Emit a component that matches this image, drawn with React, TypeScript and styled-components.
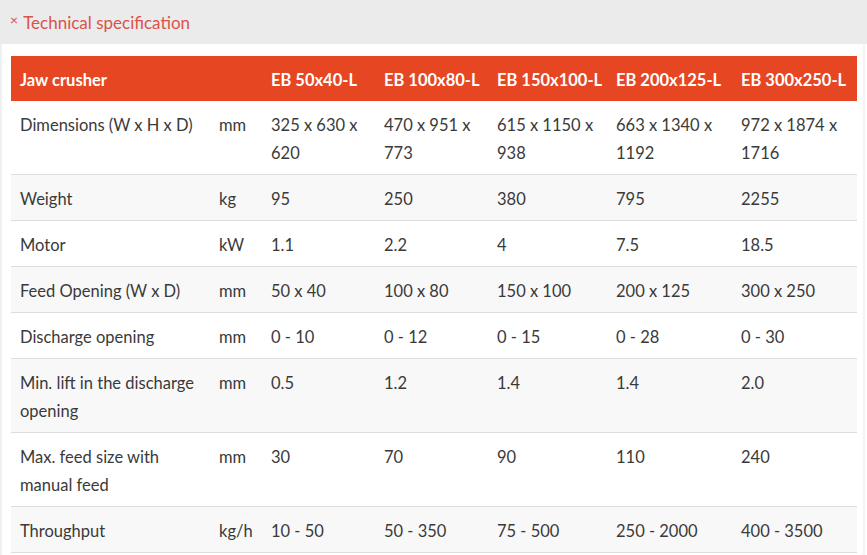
import React from "react";
import styled, { createGlobalStyle } from "styled-components";

const GlobalStyle = createGlobalStyle`
    html, body {
        margin: 0;
        padding: 0;
        background: #ffffff;
    }

    body {
        font-family: Lato, "Liberation Sans", sans-serif;
        color: #333333;
    }
`;

const models = ["EB 50x40-L", "EB 100x80-L", "EB 150x100-L", "EB 200x125-L", "EB 300x250-L"];

const rows: { label: string; unit: string; values: string[] }[] = [
    { label: "Dimensions (W x H x D)", unit: "mm", values: ["325 x 630 x 620", "470 x 951 x 773", "615 x 1150 x 938", "663 x 1340 x 1192", "972 x 1874 x 1716"] },
    { label: "Weight", unit: "kg", values: ["95", "250", "380", "795", "2255"] },
    { label: "Motor", unit: "kW", values: ["1.1", "2.2", "4", "7.5", "18.5"] },
    { label: "Feed Opening (W x D)", unit: "mm", values: ["50 x 40", "100 x 80", "150 x 100", "200 x 125", "300 x 250"] },
    { label: "Discharge opening", unit: "mm", values: ["0 - 10", "0 - 12", "0 - 15", "0 - 28", "0 - 30"] },
    { label: "Min. lift in the discharge opening", unit: "mm", values: ["0.5", "1.2", "1.4", "1.4", "2.0"] },
    { label: "Max. feed size with manual feed", unit: "mm", values: ["30", "70", "90", "110", "240"] },
    { label: "Throughput", unit: "kg/h", values: ["10 - 50", "50 - 350", "75 - 500", "250 - 2000", "400 - 3500"] },
];

const colWidths = [199, 52, 113, 113, 119, 125, 125];

const Page = styled.div`
    width: 867px;
    height: 555px;
    overflow: hidden;
    display: flex;
    flex-direction: column;
`;

const TabBar = styled.div`
    height: 44px;
    background: #ebebeb;
    display: flex;
    align-items: center;
    padding-left: 10px;
    flex-shrink: 0;
`;

const TabTitle = styled.div`
    display: flex;
    align-items: baseline;
    gap: 5px;
    color: #d9534a;
    font-size: 17px;
`;

const CloseMark = styled.span`
    font-size: 14px;
    position: relative;
    top: -4px;
`;

const Panel = styled.div`
    flex: 1;
    background: #ffffff;
    border-left: 2px solid #f0f0f0;
    border-right: 2px solid #f4f4f4;
    margin-right: 2px;
    padding: 12px 8px 0 9px;
`;

const SpecTable = styled.table`
    width: 846px;
    border-collapse: collapse;
    table-layout: fixed;
    font-size: 16.5px;
    line-height: 28px;
`;

const HeadRow = styled.tr`
    background: #e74622;
    color: #ffffff;
    height: 45px;
`;

const HeadCell = styled.th`
    text-align: left;
    font-weight: 700;
    padding: 3px 0 0 9px;
    white-space: nowrap;
`;

const BodyRow = styled.tr<{ $shaded: boolean }>`
    background: ${p => (p.$shaded ? "#f8f8f8" : "#ffffff")};
    border-bottom: 1px solid #dddddd;
`;

const Cell = styled.td`
    vertical-align: top;
    padding: 10px 9px 7px 9px;
    font-weight: 400;
    color: #3a3a3a;
`;

export default function App() {
    return (
        <Page>
            <GlobalStyle />
            <TabBar>
                <TabTitle>
                    <CloseMark>×</CloseMark>
                    Technical specification
                </TabTitle>
            </TabBar>
            <Panel>
                <SpecTable>
                    <colgroup>
                        {colWidths.map((w, i) => (
                            <col key={i} style={{ width: w }} />
                        ))}
                    </colgroup>
                    <thead>
                        <HeadRow>
                            <HeadCell>Jaw crusher</HeadCell>
                            <HeadCell />
                            {models.map(m => (
                                <HeadCell key={m}>{m}</HeadCell>
                            ))}
                        </HeadRow>
                    </thead>
                    <tbody>
                        {rows.map((r, i) => (
                            <BodyRow key={r.label} $shaded={i % 2 === 1}>
                                <Cell>{r.label}</Cell>
                                <Cell>{r.unit}</Cell>
                                {r.values.map((v, j) => (
                                    <Cell key={j}>{v}</Cell>
                                ))}
                            </BodyRow>
                        ))}
                    </tbody>
                </SpecTable>
            </Panel>
        </Page>
    );
}
